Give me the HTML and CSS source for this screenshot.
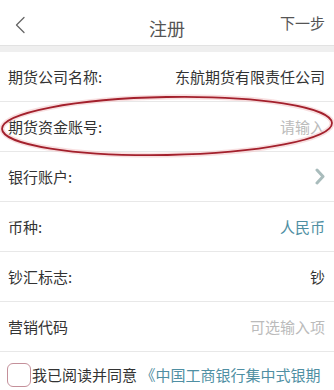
FILE: index.html
```html
<!DOCTYPE html>
<html lang="zh-CN">
<head>
<meta charset="utf-8">
<title>注册</title>
<link rel="stylesheet" href="styles.css">
</head>
<body>
<div class="page">
  <header class="topbar">
    <span class="back">
      <svg width="12" height="18" viewBox="0 0 12 18"><path d="M10 1.5 L2.5 9 L10 16.5" fill="none" stroke="#666" stroke-width="1.3" stroke-linecap="round" stroke-linejoin="round"/></svg>
    </span>
    <span class="title">注册</span>
    <span class="next">下一步</span>
  </header>
  <div class="band"></div>
  <ul class="form">
    <li class="row"><span class="label">期货公司名称:</span><span class="value">东航期货有限责任公司</span></li>
    <li class="row"><span class="label">期货资金账号:</span><span class="value hint">请输入</span></li>
    <li class="row"><span class="label">银行账户:</span>
      <span class="value">
        <svg class="chev" width="10" height="17" viewBox="0 0 10 17"><path d="M2 2 L8 8.5 L2 15" fill="none" stroke="#a9bcbc" stroke-width="3" stroke-linecap="round" stroke-linejoin="round"/></svg>
      </span>
    </li>
    <li class="row"><span class="label">币种:</span><span class="value link">人民币</span></li>
    <li class="row"><span class="label">钞汇标志:</span><span class="value">钞</span></li>
    <li class="row"><span class="label">营销代码</span><span class="value hint">可选输入项</span></li>
  </ul>
  <div class="agree">
    <span class="box"></span>
    <span class="agree-text">我已阅读并同意 <span class="link">《中国工商银行集中式银期</span></span>
  </div>
  <svg class="mark" width="334" height="70" viewBox="0 0 334 70">
    <ellipse cx="167" cy="34" rx="165" ry="29" fill="none" stroke="#f3c9cc" stroke-width="5" opacity="0.6" transform="rotate(-1 167 34)"/>
    <ellipse cx="167" cy="34" rx="165" ry="29" fill="none" stroke="#a3202c" stroke-width="1.8" transform="rotate(-1 167 34)"/>
  </svg>
</div>
</body>
</html>
```

FILE: styles.css
```css
* { box-sizing: border-box; }
html, body { margin: 0; padding: 0; background: #fff; }
body {
  font-family: "Noto Sans CJK SC", "Noto Sans", sans-serif;
  color: #333;
  width: 334px;
  height: 390px;
  overflow: hidden;
}
.page { position: relative; width: 334px; }
.topbar {
  height: 45px;
  display: flex;
  align-items: center;
  justify-content: space-between;
  padding: 0 9px 0 14px;
  position: relative;
}
.back { display: flex; align-items: center; margin-top: 4px; }
.title {
  position: absolute;
  left: 0; right: 0;
  text-align: center;
  font-size: 18px;
  color: #555;
  line-height: 20px;
  top: 18px;
}
.next { font-size: 15px; color: #555; line-height: 18px; margin-top: 1px; }
.band {
  height: 7px;
  background: #efefef;
  border-top: 1px solid #e2e2e2;
}
.form { list-style: none; margin: 0; padding: 0; }
.row {
  height: 50px;
  display: flex;
  align-items: center;
  justify-content: space-between;
  padding: 0 9px 0 8px;
  border-bottom: 1px solid #e8e8e8;
  font-size: 15px;
  line-height: 18px;
}
.label { color: #333; }
.value { color: #333; display: flex; align-items: center; }
.hint { color: #bbb; }
.link { color: #4f8fa3; }
.chev { margin-right: 0; }
.agree {
  display: flex;
  align-items: flex-start;
  padding: 10px 0 0 7px;
  white-space: nowrap;
  overflow: hidden;
  font-size: 15px;
  line-height: 22px;
}
.box {
  flex: none;
  width: 24px;
  height: 24px;
  border: 1.5px solid #c4909a;
  border-radius: 6px;
  margin-top: 1px;
}
.agree-text { margin-left: 1px; margin-top: 2px; }
.mark { position: absolute; left: 0; top: 92px; pointer-events: none; }
```
